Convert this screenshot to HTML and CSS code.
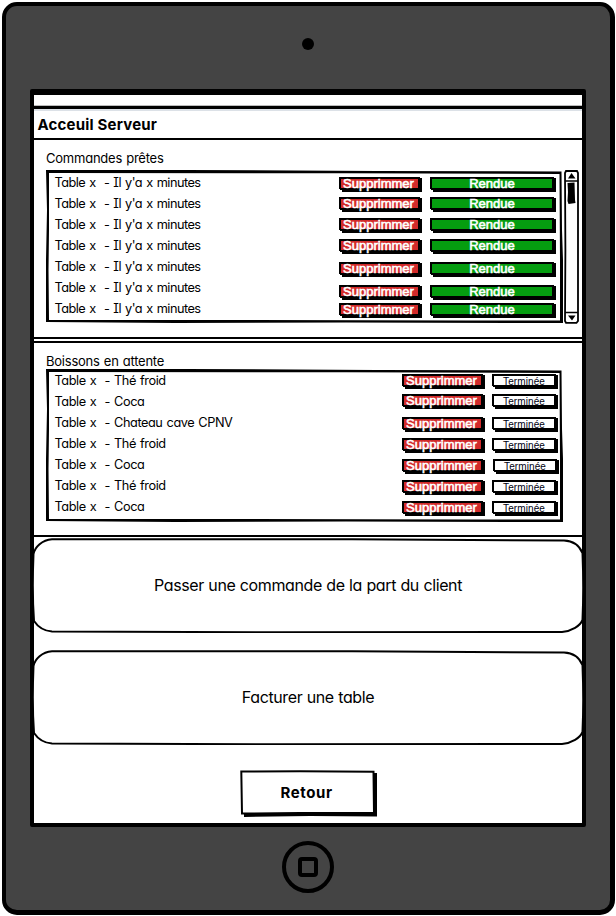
FILE: index.html
```
<!DOCTYPE html>
<html lang="fr">
<head>
<meta charset="utf-8">
<title>Acceuil Serveur</title>
<link rel="stylesheet" href="styles.css">
</head>
<body>
<svg class="defs" width="0" height="0" aria-hidden="true">
  <symbol id="box" viewBox="0 0 517 153" preserveAspectRatio="none">
    <path fill-rule="evenodd" d="M0 0H140L330 1L515.500 1.500L516 60L517 90V153L300 152.600L130 153L0 152V90L1 40ZM3 3V60L2.500 100L3 150H200L420 150.500H514V90L513.500 4L300 3.200Z"/>
  </symbol>
  <symbol id="round" viewBox="0 0 552 95" preserveAspectRatio="none">
    <path d="M20 1.300C10 2 3 9 1.500 16C.500 40 .700 65 2 83C6 89 13 93 20 93.500L250 94.300L530 94C540 93 548 88 550.500 82C551.500 60 551.500 40 550.500 15C547 7 541 3 532 2.600L320 1.300Z" fill="#fff" stroke="#000" stroke-width="2"/>
  </symbol>
</svg>
<div class="tablet">
  <div class="camera"></div>
  <main class="screen">
    <div class="status"></div>
    <header class="title"><h1>Acceuil Serveur</h1></header>
    <section class="ready">
      <h2>Commandes prêtes</h2>
      <div class="area">
        <div class="list">
          <svg class="frame"><use href="#box"/></svg>
          <ul class="names">
            <li>Table x&nbsp; - Il y'a x minutes</li><li>Table x&nbsp; - Il y'a x minutes</li><li>Table x&nbsp; - Il y'a x minutes</li><li>Table x&nbsp; - Il y'a x minutes</li><li>Table x&nbsp; - Il y'a x minutes</li><li>Table x&nbsp; - Il y'a x minutes</li><li>Table x&nbsp; - Il y'a x minutes</li>
          </ul>
          <div class="actions">
            <button class="del">Supprimmer</button><button class="done">Rendue</button>
            <button class="del">Supprimmer</button><button class="done">Rendue</button>
            <button class="del">Supprimmer</button><button class="done">Rendue</button>
            <button class="del">Supprimmer</button><button class="done">Rendue</button>
            <button class="del">Supprimmer</button><button class="done">Rendue</button>
            <button class="del">Supprimmer</button><button class="done">Rendue</button>
            <button class="del">Supprimmer</button><button class="done">Rendue</button>
          </div>
        </div>
        <svg class="scroll" viewBox="0 0 15 154">
          <path d="M2 1H13L14 3V151L12.500 152.800H2L1 151L1.400 80L1 3Z" fill="none" stroke="#000" stroke-width="1.800"/>
          <path d="M1 11H14M1 142.500H14" stroke="#000" stroke-width="1.300"/>
          <path d="M7.500 3L11.500 8.500H4ZM4 145.500H11.500L8 150.500Z"/>
          <path d="M3.500 13L10.500 12.500L11 30L11.500 33L4.500 34L3.500 31L4 22Z"/>
        </svg>
      </div>
    </section>
    <section class="drinks">
      <h2>Boissons en attente</h2>
      <div class="list">
        <svg class="frame"><use href="#box"/></svg>
        <ul class="names">
          <li>Table x&nbsp; - Thé froid</li><li>Table x&nbsp; - Coca</li><li>Table x&nbsp; - Chateau cave CPNV</li><li>Table x&nbsp; - Thé froid</li><li>Table x&nbsp; - Coca</li><li>Table x&nbsp; - Thé froid</li><li>Table x&nbsp; - Coca</li>
        </ul>
        <div class="actions">
          <button class="del">Supprimmer</button><button class="end">Terminée</button>
          <button class="del">Supprimmer</button><button class="end">Terminée</button>
          <button class="del">Supprimmer</button><button class="end">Terminée</button>
          <button class="del">Supprimmer</button><button class="end">Terminée</button>
          <button class="del">Supprimmer</button><button class="end shifted">Terminée</button>
          <button class="del">Supprimmer</button><button class="end">Terminée</button>
          <button class="del">Supprimmer</button><button class="end">Terminée</button>
        </div>
      </div>
    </section>
    <button class="big"><svg class="frame"><use href="#round"/></svg><span>Passer une commande de la part du client</span></button>
    <button class="big second"><svg class="frame"><use href="#round"/></svg><span>Facturer une table</span></button>
    <button class="back">
      <svg class="frame" viewBox="0 0 137 47"><path d="M4 4L137 3V46.500L70 46L4 47Z"/><path d="M1.300 1.500L60 1.300L133.500 1.800L134 43L60 43L2 43.500Z" fill="#fff" stroke="#000" stroke-width="2"/></svg>
      <span>Retour</span>
    </button>
  </main>
  <div class="home"><i></i></div>
</div>
</body>
</html>
```
FILE: styles.css
```
* { box-sizing: border-box; margin: 0; padding: 0; }
html, body { width: 616px; height: 916px; overflow: hidden; background: #fff; }
body { font: 13px/21px Inter, "Open Sans", sans-serif; font-feature-settings: "cv11", "cv08"; color: #000; padding: 2px 1px 1px 2px; }
.defs { position: absolute; }
.tablet {
  height: 913px; border: 4px solid #000; border-right-width: 5px; border-bottom-width: 5px;
  border-radius: 15px; background: #444; display: flex; flex-direction: column; align-items: center;
}
.camera { width: 12px; height: 12px; border-radius: 50%; background: #000; margin: 32px 0 39px 296px; align-self: flex-start; }
.screen { width: 556px; height: 738px; border: 4px solid #000; border-top-width: 3px; background: #fff; align-self: flex-start; margin-left: 24px; border-radius: 2px; display: flex; flex-direction: column; flex: none; }
.status { height: 17px; border-top: 3px solid #000; border-bottom: 3px solid #000; box-shadow: inset 0 -1px #bbb; flex: none; }
.title { height: 31px; border-top: 2px solid #dce1e7; border-bottom: 2.5px solid #000; padding: 2px 3.5px 0; flex: none; }
h1 { font-size: 15px; line-height: 24px; letter-spacing: .2px; white-space: nowrap; }
h2 { font-size: 13px; line-height: 18px; font-weight: 400; letter-spacing: -.23px; word-spacing: .7px; white-space: nowrap; }
section { width: 550px; margin-left: -1px; flex: none; border: solid #000; border-width: 0 1.5px 2px; padding-left: 11px; }
.ready { height: 199px; padding-top: 9px; }
.drinks { height: 196px; margin-top: 2px; border-top-width: 2px; padding-top: 9px; }
.area { display: flex; margin-top: 3px; gap: 1px; }
.ready h2, .drinks h2 { padding-left: 1px; }
.list { position: relative; width: 517px; height: 153px; display: flex; justify-content: space-between; padding: 3px 0 0 8.5px; margin-left: 1px; flex: none; }
.drinks .list { margin-top: -1px; }
.frame { position: absolute; inset: 0; width: 100%; height: 100%; pointer-events: none; overflow: visible; }
.names { list-style: none; white-space: nowrap; font-size: 12.75px; letter-spacing: -.52px; word-spacing: 1px; }
.drinks .names { letter-spacing: -.45px; }
.names li { height: 21px; line-height: 20px; }
.drinks .names { margin-top: -1px; }
.scroll { width: 15px; height: 154px; flex: none; }
.actions { display: grid; position: relative; z-index: 0; }
.ready .actions { grid-template: 20px 21px 21px 23px 23px 18px 14px / 91px 133px; margin-top: 4px; }
.drinks .actions { grid-template: 20px 23px 21px 21px 21px 21px 14px / 90px 71px; margin-top: 2px; }
button { font: inherit; font-feature-settings: inherit; color: #000; border: 0; background: none; position: relative; }
.del, .done, .end { width: 81px; height: 12px; background: #d22b2b; border: 2px solid #000; border-bottom-width: 1px; box-shadow: 1px 1px #000, 2px 1px #000; color: #fff; font: 13px/9px "Liberation Sans", sans-serif; white-space: nowrap; text-align: center; -webkit-text-stroke: .6px #fff; }
.del::before, .done::before, .end::before { content: ""; position: absolute; z-index: -1; left: 1px; right: -4px; top: 2px; bottom: -4px; background: #000; }
.del { padding-right: 2px; }
.done { width: 124px; background: #059d10; }
.end { width: 64px; height: 12px; background: #fff; color: #001; font-size: 10px; line-height: 12px; letter-spacing: .1px; -webkit-text-stroke: 0; }
.shifted { margin-left: 1px; }
.big { width: 552px; height: 95px; margin: 1px 0 0 -2px; font-size: 16px; line-height: 20px; letter-spacing: -.38px; word-spacing: .3px; flex: none; padding-bottom: 2px; }
.big span, .back span { position: relative; white-space: nowrap; }
.second { margin-top: 17px; }
.back { width: 137px; height: 47px; margin: 25px 0 0 206px; font-size: 15px; font-weight: 700; flex: none; padding: 0 4px 3px 0; letter-spacing: .6px; }
.home { width: 52px; height: 52px; border: 4px solid #000; border-radius: 50%; display: grid; place-items: center; margin: 14px 0 0 276px; align-self: flex-start; flex: none; }
.home i { width: 20px; height: 20px; border: 4px solid #000; border-radius: 4px; }
```
